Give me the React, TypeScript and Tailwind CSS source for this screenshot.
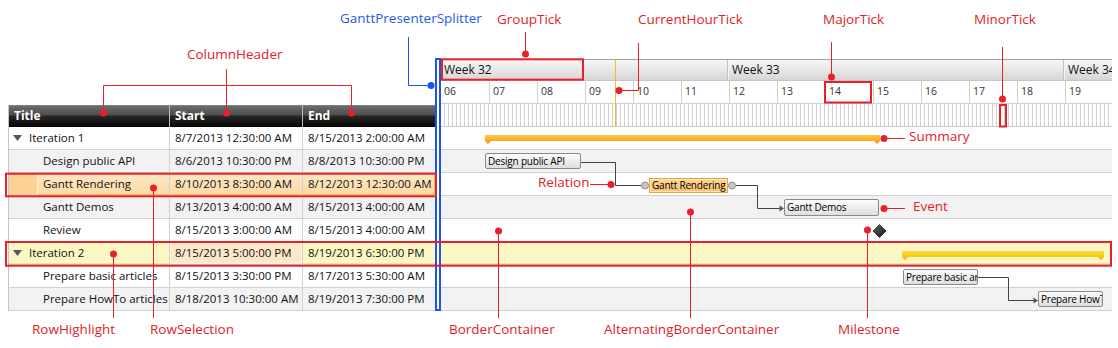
import React from 'react';

const RED = '#e8202a';
const BLUE = '#1b55ee';

type Row = {
  title: string;
  start: string;
  end: string;
  level: 0 | 1;
  kind?: 'sel' | 'hl';
};

const ROWS: Row[] = [
  { title: 'Iteration 1', start: '8/7/2013 12:30:00 AM', end: '8/15/2013 2:00:00 AM', level: 0 },
  { title: 'Design public API', start: '8/6/2013 10:30:00 PM', end: '8/8/2013 10:30:00 PM', level: 1 },
  { title: 'Gantt Rendering', start: '8/10/2013 8:30:00 AM', end: '8/12/2013 12:30:00 AM', level: 1, kind: 'sel' },
  { title: 'Gantt Demos', start: '8/13/2013 4:00:00 AM', end: '8/15/2013 4:00:00 AM', level: 1 },
  { title: 'Review', start: '8/15/2013 3:00:00 AM', end: '8/15/2013 4:00:00 AM', level: 1 },
  { title: 'Iteration 2', start: '8/15/2013 5:00:00 PM', end: '8/19/2013 6:30:00 PM', level: 0, kind: 'hl' },
  { title: 'Prepare basic articles', start: '8/15/2013 3:30:00 PM', end: '8/17/2013 5:30:00 AM', level: 1 },
  { title: 'Prepare HowTo articles', start: '8/18/2013 10:30:00 AM', end: '8/19/2013 7:30:00 PM', level: 1 },
];

const HOURS = ['06', '07', '08', '09', '10', '11', '12', '13', '14', '15', '16', '17', '18', '19'];

const rowBg = (i: number, kind?: 'sel' | 'hl') => {
  if (kind === 'sel') return 'bg-[linear-gradient(to_bottom,#fee8c4,#fcdaa6)] shadow-[inset_0_0_0_1px_#f1bd4c]';
  if (kind === 'hl') return 'bg-[#fcf8c6] shadow-[inset_0_1px_0_#f7e48e,inset_0_-1px_0_#f7e48e]';
  return i % 2 === 1 ? 'bg-[#f2f2f2]' : 'bg-white';
};

function Triangle() {
  return (
    <svg width="9" height="6" viewBox="0 0 9 6" className="mr-[7px] shrink-0">
      <polygon points="0,0 9,0 4.5,6" fill="#555" />
    </svg>
  );
}

function TaskGrid() {
  return (
    <div className="mt-[47px] w-[427px] border-l border-[#c4c4c4] text-[11.5px] text-[#111]">
      {/* column headers */}
      <div className="flex h-[22px] bg-[linear-gradient(to_bottom,#939393_0px,#6c6c6c_1px,#4d4d4d_10px,#272727_11px,#050505_22px)] text-[12px] font-bold leading-[22px] text-white">
        <div className="w-[161px] border-r border-[#bdbdbd] pl-[5px]">Title</div>
        <div className="w-[133px] border-r border-[#bdbdbd] pl-[5px]">Start</div>
        <div className="w-[132px] pl-[5px]">End</div>
      </div>
      {ROWS.map((r, i) => (
        <div key={r.title} className={`flex h-[23px] border-b border-[#d2d2d2] ${rowBg(i, r.kind)}`}>
          <div className="flex w-[161px] items-center overflow-hidden whitespace-nowrap border-r border-[#d2d2d2]">
            {r.kind === 'sel' ? (
              <>
                <span className="mr-[5px] h-full w-[29px] shrink-0 border-r border-[#fff2d6] bg-[#fcd395]" />
                {r.title}
              </>
            ) : r.level === 0 ? (
              <>
                <span className="w-[4px] shrink-0" />
                <Triangle />
                {r.title}
              </>
            ) : (
              <>
                <span className="w-[34px] shrink-0" />
                {r.title}
              </>
            )}
          </div>
          <div
            className={`flex w-[133px] items-center whitespace-nowrap border-r border-[#d2d2d2] pl-[5px] ${
              r.kind === 'hl' ? 'bg-[#fde8c9] shadow-[inset_0_0_0_1px_#fff6e4]' : ''
            }`}
          >
            {r.start}
          </div>
          <div className="flex w-[132px] items-center whitespace-nowrap pl-[5px]">{r.end}</div>
        </div>
      ))}
    </div>
  );
}

function Bars() {
  const sum = (x: number, y: number, w: number) =>
    `${x},${y} ${x + w},${y} ${x + w},${y + 6} ${x + w - 3},${y + 9} ${x + w - 6},${y + 6} ${x + 6},${y + 6} ${x + 3},${y + 9} ${x},${y + 6}`;
  return (
    <svg width="671" height="184" className="pointer-events-none absolute left-0 top-0">
      <defs>
        <linearGradient id="sumA" x1="0" y1="0" x2="0" y2="1">
          <stop offset="0" stopColor="#ffc84a" />
          <stop offset="1" stopColor="#f29a0e" />
        </linearGradient>
        <linearGradient id="sumB" x1="0" y1="0" x2="0" y2="1">
          <stop offset="0" stopColor="#ffdc3a" />
          <stop offset="1" stopColor="#f3b800" />
        </linearGradient>
        <linearGradient id="ms" x1="0" y1="0" x2="1" y2="1">
          <stop offset="0" stopColor="#6a6a6a" />
          <stop offset="1" stopColor="#111" />
        </linearGradient>
      </defs>
      <polygon points={sum(44, 8, 395)} fill="url(#sumA)" />
      <polygon points={sum(461, 124, 202)} fill="url(#sumB)" />

      <g fill="none" stroke="#444" strokeWidth="1">
        <path d="M140 35.5 H174.5 V58.5 H200.5" />
        <path d="M294.5 58.5 H316.5 V81.5 H340" />
        <path d="M537 150.5 H567.5 V173.5 H594" />
      </g>
      <polygon points="338.5,78.5 343,81.5 338.5,84.5" fill="#555" />
      <polygon points="592.5,170.5 597,173.5 592.5,176.5" fill="#555" />
      <circle cx="204" cy="58.5" r="3.5" fill="#c6c6c6" stroke="#8e8e8e" />
      <circle cx="291" cy="58.5" r="3.5" fill="#c6c6c6" stroke="#8e8e8e" />

      <polygon points="438.5,97.5 445,104 438.5,110.5 432,104" fill="url(#ms)" stroke="#1a1a1a" strokeWidth="0.8" />
    </svg>
  );
}

const boxCls =
  'absolute overflow-hidden whitespace-nowrap rounded-[2px] border border-[#8a8a8a] bg-[linear-gradient(to_bottom,#fcfcfc,#dedede)] pl-[2px] text-[10px] tracking-[-0.2px] leading-[14px] text-black';

function Timeline() {
  return (
    <div className="mt-[1px] w-[671px] overflow-hidden">
      <div className="relative">
        {/* group ticks */}
        <div className="flex h-[22px] border-y border-t-[#a2a2a2] border-b-[#c6c6c6] bg-[#ececec] text-[12px] leading-[20px] text-[#111]">
          <div className="w-[288px] shrink-0 border-r border-[#f4f4f4] bg-[linear-gradient(to_bottom,#f6f6f6,#e6e6e6_55%,#d5d5d5)] pl-[3px] shadow-[inset_-1px_0_0_#c2c2c2]">
            Week 32
          </div>
          <div className="w-[336px] shrink-0 border-r border-[#f4f4f4] bg-[linear-gradient(to_bottom,#f6f6f6,#e6e6e6_55%,#d5d5d5)] pl-[3px] shadow-[inset_-1px_0_0_#c2c2c2]">
            Week 33
          </div>
          <div className="w-[48px] shrink-0 overflow-hidden whitespace-nowrap bg-[linear-gradient(to_bottom,#f6f6f6,#e6e6e6_55%,#d5d5d5)] pl-[3px]">
            Week 34
          </div>
        </div>
        {/* major ticks */}
        <div className="flex h-[23px] border-b border-[#d0d0d0] text-[10.5px] leading-[14px] text-[#333]">
          {HOURS.map((h, i) => (
            <div
              key={h}
              className={`w-[48px] shrink-0 pl-[3px] pt-[3px] ${i === 0 ? '' : 'border-l border-[#d0d0d0]'}`}
            >
              {h}
            </div>
          ))}
        </div>
        {/* minor ticks */}
        <div className="h-[23px] border-b border-[#cacaca] bg-[repeating-linear-gradient(to_right,transparent_0px,transparent_3px,#d0d0d0_3px,#d0d0d0_4px)]" />
        {/* current hour */}
        <div className="absolute left-[174px] top-0 h-[68px] w-px bg-[#f4b740]" />
      </div>

      <div className="relative">
        {ROWS.map((r, i) => (
          <div
            key={r.title}
            className={`relative h-[23px] border-b border-[#d0d0d0] ${
              r.kind === 'hl' ? rowBg(i, 'hl') : i % 2 === 1 ? 'bg-[#f2f2f2]' : 'bg-white'
            }`}
          >
            {i === 1 && <div className={`${boxCls} left-[44px] top-[3px] h-[16px] w-[96px]`}>Design public API</div>}
            {i === 2 && (
              <div className="absolute left-[208px] top-[5px] h-[15px] w-[79px] overflow-hidden whitespace-nowrap border border-[#e4a53a] bg-[linear-gradient(to_bottom,#fdd699,#fbbe6c)] pl-[2px] text-[10px] tracking-[-0.2px] leading-[13px] text-black shadow-[inset_0_0_0_1px_#fde6bf]">
                Gantt Rendering
              </div>
            )}
            {i === 3 && <div className={`${boxCls} left-[343px] top-[3px] h-[17px] w-[95px]`}>Gantt Demos</div>}
            {i === 6 && <div className={`${boxCls} left-[462px] top-[4px] h-[16px] w-[75px]`}>Prepare basic articles</div>}
            {i === 7 && <div className={`${boxCls} left-[597px] top-[3px] h-[16px] w-[65px]`}>Prepare HowTo articles</div>}
          </div>
        ))}
        <Bars />
      </div>
    </div>
  );
}

const labelCls = 'absolute whitespace-nowrap text-[13.5px] leading-none';

function Callouts() {
  return (
    <>
      <svg width="1118" height="348" className="pointer-events-none absolute left-0 top-0">
        <g fill="none" stroke={RED} strokeWidth="1">
          <path d="M226.5 69 V113" />
          <path d="M103.5 113 V85.5 H351.5 V113" />
          <path d="M525.5 32 V54" />
          <path d="M638.5 43 V90.5 H619" />
          <path d="M831.5 42 V77" />
          <path d="M1002.5 47 V99" />
          <path d="M884 138.5 H905" />
          <path d="M590 184.5 H611" />
          <path d="M884 208.5 H905" />
          <path d="M867.5 230 V318" />
          <path d="M498.5 231 V318" />
          <path d="M690.5 212 V318" />
          <path d="M153.5 188 V318" />
          <path d="M113.5 254 V318" />
        </g>
        <g fill="none" stroke={RED} strokeWidth="2">
          <rect x="442" y="59.3" width="141" height="20.4" />
          <rect x="825" y="82" width="46" height="20.5" />
          <rect x="1000" y="105" width="6" height="21.5" />
          <rect x="6" y="173.7" width="430" height="22.6" />
          <rect x="6" y="242" width="1105" height="23.7" />
        </g>
        <g fill={RED}>
          <circle cx="103.5" cy="113" r="3.5" />
          <circle cx="226.5" cy="113" r="3.5" />
          <circle cx="351.5" cy="113" r="3.5" />
          <circle cx="525.5" cy="54" r="3.5" />
          <circle cx="619" cy="90.5" r="3.5" />
          <circle cx="831.5" cy="77" r="3.5" />
          <circle cx="1002.5" cy="99" r="3.5" />
          <circle cx="884" cy="138.5" r="3.5" />
          <circle cx="611" cy="184.5" r="3.5" />
          <circle cx="884" cy="208.5" r="3.5" />
          <circle cx="867.5" cy="230" r="3.5" />
          <circle cx="498.5" cy="231" r="3.5" />
          <circle cx="690.5" cy="212" r="3.5" />
          <circle cx="153.5" cy="188" r="3.5" />
          <circle cx="113.5" cy="254" r="3.5" />
        </g>
        <path d="M408.5 37 V85.5 H431" fill="none" stroke={BLUE} strokeWidth="1" />
        <circle cx="431" cy="85.5" r="3.5" fill={BLUE} />
      </svg>

      <div className={`${labelCls} left-[187px] top-[48px] text-[#e32228]`}>ColumnHeader</div>
      <div className={`${labelCls} left-[340px] top-[12px] text-[#1f5ae8]`}>GanttPresenterSplitter</div>
      <div className={`${labelCls} left-[497px] top-[13px] text-[#e32228]`}>GroupTick</div>
      <div className={`${labelCls} left-[638px] top-[13px] text-[#e32228]`}>CurrentHourTick</div>
      <div className={`${labelCls} left-[823px] top-[13px] text-[#e32228]`}>MajorTick</div>
      <div className={`${labelCls} left-[974px] top-[13px] text-[#e32228]`}>MinorTick</div>
      <div className={`${labelCls} left-[909px] top-[130px] text-[#e32228]`}>Summary</div>
      <div className={`${labelCls} left-[538px] top-[176px] text-[#e32228]`}>Relation</div>
      <div className={`${labelCls} left-[913px] top-[200px] text-[#e32228]`}>Event</div>
      <div className={`${labelCls} left-[32px] top-[323px] text-[#e32228]`}>RowHighlight</div>
      <div className={`${labelCls} left-[150px] top-[323px] text-[#e32228]`}>RowSelection</div>
      <div className={`${labelCls} left-[449px] top-[323px] text-[#e32228]`}>BorderContainer</div>
      <div className={`${labelCls} left-[604px] top-[323px] text-[#e32228]`}>AlternatingBorderContainer</div>
      <div className={`${labelCls} left-[838px] top-[323px] text-[#e32228]`}>Milestone</div>
    </>
  );
}

export default function App() {
  return (
    <div className="relative h-[348px] w-[1118px] overflow-hidden bg-white font-['Open_Sans',sans-serif]">
      <div className="flex items-start pl-[8px] pt-[58px]">
        <TaskGrid />
        <div className="h-[253px] w-[6px] shrink-0 border-2 border-[#1b55ee] bg-white" />
        <Timeline />
      </div>
      <Callouts />
    </div>
  );
}
